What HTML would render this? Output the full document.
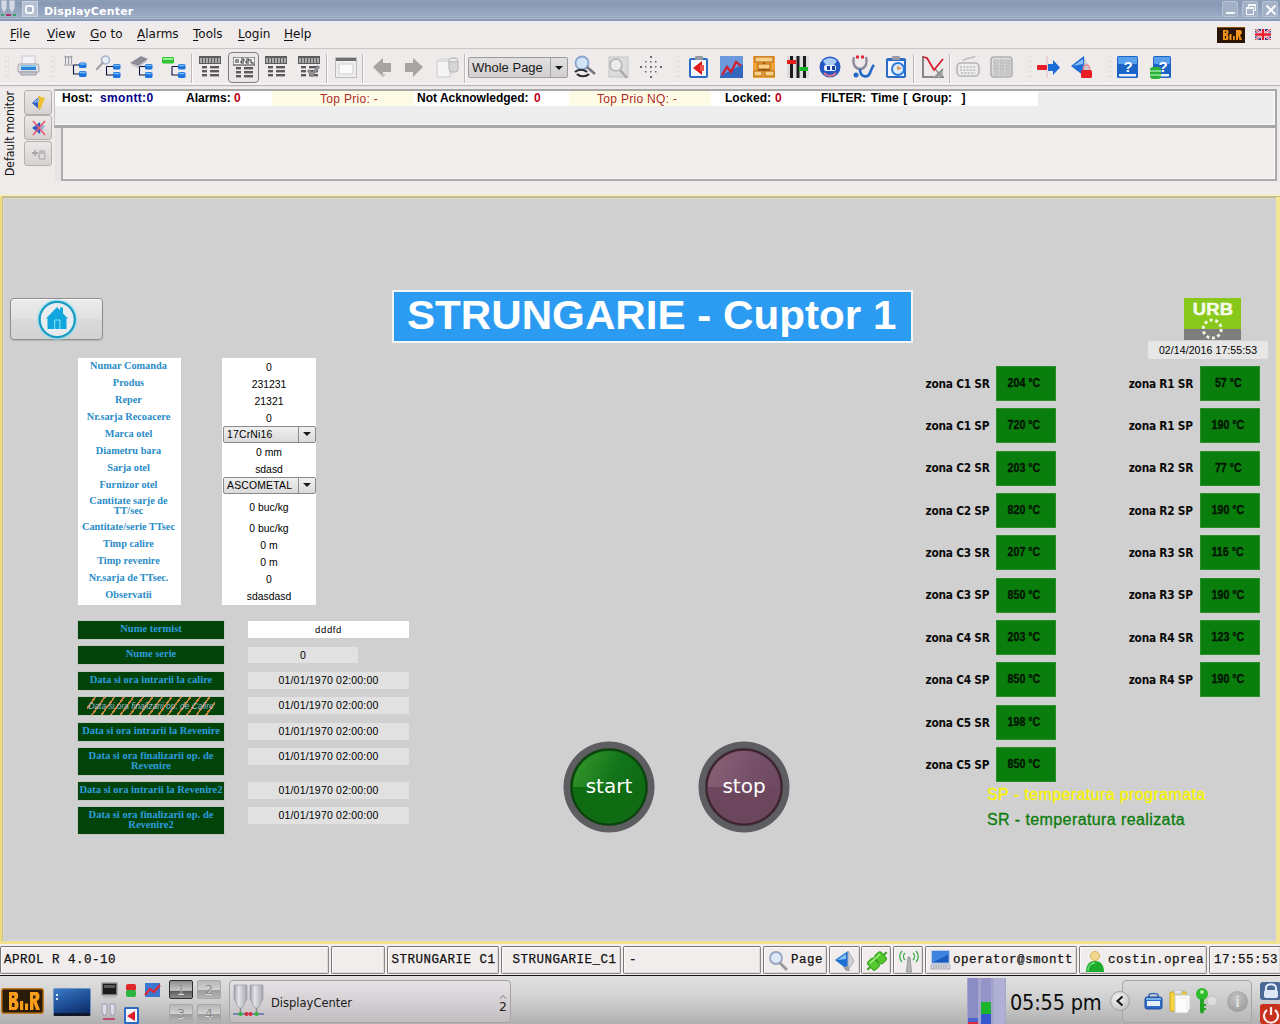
<!DOCTYPE html>
<html>
<head>
<meta charset="utf-8">
<title>DisplayCenter</title>
<style>
*{box-sizing:border-box;margin:0;padding:0}
html,body{width:1280px;height:1024px;overflow:hidden;background:#efebeb;font-family:"DejaVu Sans","Liberation Sans",sans-serif;font-size:12px;color:#000}
.abs{position:absolute}
#title{position:absolute;left:0;top:0;width:1280px;height:21px;background:linear-gradient(#8f9fb8 0,#8899b3 4px,#909fbb 8px,#9aaac4 16px,#a1b3ca 16.500px,#a1b3ca 17.500px,#8fa5be 17.500px,#8fa5be 18.500px,#adbed2 18.500px,#adbed2 19.500px,#8b9aad 19.500px,#8b9aad 21px)}
#title .t{position:absolute;left:44px;top:5px;font-weight:bold;font-size:11px;color:#fff;letter-spacing:.2px}
#menu{position:absolute;left:0;top:21px;width:1280px;height:28px;background:#efebeb;border-bottom:1px solid #c9c5c5}
#menu span{position:absolute;top:6px;font-size:12px;color:#111}
#menu u{text-decoration:underline;text-underline-offset:2px}
#toolbar{position:absolute;left:0;top:49px;width:1280px;height:38px;background:#efebeb}
#alarm{position:absolute;left:0;top:87px;width:1280px;height:107px;background:#efebeb}
#main{position:absolute;left:0;top:194px;width:1280px;height:750px;background:#d0d0d0;overflow:hidden}
#main i{position:absolute;display:block}
#mc{position:absolute;left:0;top:0;width:1280px;height:1024px}
#status{position:absolute;left:0;top:944px;width:1280px;height:32px;background:#f3efef;border-bottom:1px solid #141414;overflow:hidden}
#taskbar{position:absolute;left:0;top:976px;width:1280px;height:48px;background:linear-gradient(#e1e1e1 0,#d5d5d5 35%,#c6c6c6 65%,#b0b0b0 100%);overflow:hidden}

.ic{position:absolute}
.grip{position:absolute;top:5px;width:5px;height:27px;background-image:radial-gradient(circle,#d4d0d0 0.9px,transparent 1.2px);background-size:3px 5px;opacity:.5}
.sep{position:absolute;top:5px;width:2px;height:29px;border-left:1px solid #bdb9b9;border-right:1px solid #fbf9f9}
.combo{border:1px solid #9c9c9c;border-radius:2px;background:linear-gradient(#e2dfdf,#d2cfcf)}
.combo span{position:absolute;left:3px;top:2px;font-family:"Liberation Sans",sans-serif;font-size:13px;letter-spacing:0;color:#1a1a1a;white-space:nowrap}
.combo i{position:absolute;right:16px;top:0;width:1px;height:19px;background:#a4a4a4}
.combo b{position:absolute;right:4px;top:8px;width:0;height:0;border:4px solid transparent;border-top:4.500px solid #1a1a1a;border-bottom:0}

.wb{position:absolute;top:1px;width:16px;height:16px;background:#a3b1c7;border:1px solid #b7c2d4;border-radius:2px}
.wb i{position:absolute;display:block}

.vt{position:absolute;left:-40px;top:39px;width:100px;height:15px;line-height:15px;transform:rotate(-90deg);font-family:"DejaVu Sans Condensed","DejaVu Sans",sans-serif;font-size:12px;text-align:center;white-space:nowrap;color:#111}
.sb{position:absolute;left:24px;width:28px;height:25px;border:1px solid #b4b0b0;border-radius:3px;background:linear-gradient(#ece8e8,#d6d2d2)}
.sb svg{position:absolute;left:5px;top:3px}
.ab{position:absolute;top:4px;font-family:"Liberation Sans",sans-serif;font-weight:bold;font-size:12px;white-space:nowrap;line-height:15px}
.ar{position:absolute;top:5px;font-family:"Liberation Sans",sans-serif;font-size:12px;white-space:nowrap;line-height:15px;color:#b02a2a;letter-spacing:.3px}

.homeb{border:1px solid #8e8e8e;border-radius:4px;background:linear-gradient(#ebebeb 0,#e2e2e2 48%,#dadada 52%,#d2d2d2 100%);box-shadow:inset 0 1px 0 #fafafa,0 1px 1px #b4b4b4}
.ttl{font-family:"Liberation Sans",sans-serif;font-weight:bold;font-size:40px;line-height:49px;color:#fff;text-align:center;white-space:nowrap;transform:scaleX(1.054);transform-origin:257px 0}
.urb{font-family:"Liberation Sans",sans-serif;font-weight:bold;font-size:16px;line-height:20px;color:#f4fae8;text-align:center;letter-spacing:.2px;transform:scaleX(1.15);-webkit-text-stroke:.5px #f4fae8}
.hv{font-family:"Liberation Sans",sans-serif}
.fl{font-family:"Liberation Serif",serif;font-weight:bold;font-size:10.300px;line-height:12px;color:#2a8cc8;text-align:center;white-space:nowrap}
.fv{font-family:"Liberation Sans",sans-serif;font-size:10.400px;line-height:12px;text-align:center;white-space:nowrap;letter-spacing:0}
.cb{border:1px solid #8a8a8a;border-radius:2px;background:linear-gradient(#f0f0f0,#dadada)}
.cb span{position:absolute;left:3px;top:1px;font-family:"Liberation Sans",sans-serif;font-size:10.400px;line-height:13px;letter-spacing:.2px}
.cb i{position:absolute;right:16px;top:0;width:1px;height:100%;background:#8e8e8e}
.cb b{position:absolute;right:4px;top:5px;width:0;height:0;border:4px solid transparent;border-top:4.500px solid #1a1a1a;border-bottom:0}
.gl{background:#02430a;font-family:"Liberation Serif",serif;font-weight:bold;font-size:10.500px;color:#2c9cdc;text-align:center;white-space:nowrap;box-shadow:0 0 0 1px #c4c8c4}
.gl em{font-family:"Liberation Sans",sans-serif;font-style:italic;font-weight:normal;font-size:8.400px;color:#9cbcd4}
.hat{position:absolute;overflow:hidden}
.hat:before{content:"";position:absolute;left:9px;right:9px;top:0;bottom:0;background:repeating-linear-gradient(126deg,transparent 0,transparent 5.900px,#c8843c 5.900px,#c8843c 7.700px)}
.hat em{position:relative}
.gv{background:#e1e1e1;font-family:"Liberation Sans",sans-serif;font-size:10.500px;line-height:17px;text-align:center;white-space:nowrap;letter-spacing:.2px}
.rb{width:92px;height:92px;border-radius:50%}
.rb .hl{position:absolute;left:10px;top:10px;width:72px;height:36px;border-radius:36px 36px 0 0}
.rb span{position:absolute;left:0;top:30px;width:92px;text-align:center;font-family:"DejaVu Sans",sans-serif;font-size:20px;line-height:30px;color:#fff}
.zl{font-family:"DejaVu Sans Condensed","DejaVu Sans",sans-serif;font-size:11.800px;font-weight:bold;line-height:18px;white-space:nowrap;letter-spacing:-.25px;color:#0a0a0a}
.zb{width:60px;height:35px;background:#0a7e0c;border:1px solid #2a8e2a;font-family:"Liberation Sans",sans-serif;font-weight:bold;font-size:13px;line-height:32px;text-align:center;color:#021402;padding-right:4px}
.zb span{display:inline-block;transform:scaleX(.82);-webkit-text-stroke:.35px #021402}
.lg{font-family:"Liberation Sans",sans-serif;font-size:16px;line-height:19px;white-space:nowrap;letter-spacing:.4px;-webkit-text-stroke:.3px currentColor}

.sf{position:absolute;top:2px;height:28px;border:1px solid #8c8888;border-top-color:#767272;border-left-color:#7c7878;border-radius:2px;background:#f1eded;box-shadow:inset 1px 1px 0 #fbf9f9,inset -1px -1px 0 #dcd8d8;overflow:hidden}
.sf span{position:absolute;top:6px;font-family:"Liberation Mono",monospace;font-size:12.500px;letter-spacing:.5px;line-height:15px;white-space:nowrap;color:#111;-webkit-text-stroke:.25px #111}
.pg{position:absolute;width:24px;height:19px;border:1px solid #a8a8a8;border-radius:2px;background:linear-gradient(#b8b8b8 0,#d0d0d0 50%,#9c9c9c 55%,#b4b4b4 100%);font-family:"DejaVu Sans",sans-serif;font-size:13px;line-height:17px;text-align:center;color:#8a8a8a;text-shadow:0 1px 0 #dcdcdc}
</style>
</head>
<body>
<div id="title"><svg class="ic" style="left:0;top:0" width="17" height="17" viewBox="0 0 17 17"><path d="M1 0h6v8l-2 4H3L1 8z" fill="#d4dae6" stroke="#9aa6ba"/><path d="M9 0h6v8l-2 4h-2L9 8z" fill="#d4dae6" stroke="#9aa6ba"/><rect x="1" y="14" width="3" height="2" fill="#3c9c6c"/><rect x="6" y="14" width="5" height="2" fill="#b0306c"/><rect x="13" y="14" width="3" height="2" fill="#3c9c6c"/><path d="M4 12v2M12 12v2" stroke="#b8c0d0"/></svg>
<div class="abs" style="left:22px;top:1px;width:16px;height:16px;background:#b4c0d2;border:1px solid #c8d2e0"></div><div class="abs" style="left:25px;top:5px;width:9px;height:9px;border:2px solid #f4f6fa;border-radius:3px;background:#a8b4c8"></div>
<span class="t">DisplayCenter</span>
<div class="wb" style="left:1222px"><i style="left:3px;top:10px;width:9px;height:2px;background:#f4f6fa"></i></div>
<div class="wb" style="left:1242px"><i style="left:5px;top:2px;width:8px;height:7px;border:1px solid #f4f6fa;border-top-width:2px"></i><i style="left:3px;top:5px;width:8px;height:8px;border:1px solid #f4f6fa;border-top-width:2px;background:#a4b2c8"></i></div>
<div class="wb" style="left:1262px"><svg width="16" height="16" viewBox="0 0 16 16" style="position:absolute;left:0;top:0"><path d="M3.500 3.500l9 9M12.500 3.500l-9 9" stroke="#f8fafc" stroke-width="2.200"/></svg></div>
</div>
<div id="menu"><div class="abs" style="left:0;top:0;width:1280px;height:2px;background:linear-gradient(#eaeefa,#eeeef4)"></div>
<span style="left:10px"><u>F</u>ile</span>
<span style="left:47px"><u>V</u>iew</span>
<span style="left:90px"><u>G</u>o to</span>
<span style="left:137px"><u>A</u>larms</span>
<span style="left:193px"><u>T</u>ools</span>
<span style="left:238px"><u>L</u>ogin</span>
<span style="left:284px"><u>H</u>elp</span>
<svg class="ic" style="left:1217px;top:6px" width="28" height="16" viewBox="0 0 28 16"><rect width="28" height="16" fill="#2a1404"/><rect x="0" y="0" width="28" height="1" fill="#8c4c0c"/><path d="M6 3h4c2 0 2 4 0 4.500 2 .5 2 5.500 0 5.500H6z" fill="#f4941c"/><path d="M12.500 7h2v6h-2zM16 9h1.800v4H16z" fill="#f4941c"/><path d="M19 3h4c2.500 0 2.500 4.500 0 5l2 5h-2.500l-1.500-4.500V13h-2z" fill="#f4941c"/><rect x="7.800" y="4.500" width="1.400" height="1.600" fill="#2a1404"/><rect x="7.800" y="9" width="1.400" height="2.400" fill="#2a1404"/></svg>
<svg class="ic" style="left:1255px;top:8px" width="16" height="11" viewBox="0 0 16 11"><rect width="16" height="11" fill="#2c3c8c"/><path d="M0 0l16 11M16 0L0 11" stroke="#f4f0f4" stroke-width="2.400"/><path d="M0 0l16 11M16 0L0 11" stroke="#e02838" stroke-width="1"/><path d="M8 0v11M0 5.500h16" stroke="#f4f0f4" stroke-width="4"/><path d="M8 0v11M0 5.500h16" stroke="#e81c2c" stroke-width="2.400"/></svg>
</div>
<div id="toolbar"><div class="abs" style="left:0;top:34px;width:1280px;height:1px;background:#f9f7f7"></div><div class="abs" style="left:0;top:36px;width:1280px;height:1px;background:#bab8b8"></div><div class="abs" style="left:0;top:37px;width:1280px;height:1px;background:#e4e2e2"></div><div class="grip" style="left:4px"></div>
<svg class="ic" style="left:17px;top:6px" width="23" height="22" viewBox="0 0 23 22"><rect x="5" y="1" width="13" height="8" fill="#f4f4f6" stroke="#c8c8d0"/><path d="M2 9h19l1 2v6H1v-6z" fill="#dcdce2" stroke="#a8a8b4"/><rect x="4" y="10" width="15" height="5" fill="#2f86d8"/><rect x="4" y="10" width="15" height="2" fill="#8cc4f2"/><path d="M3 17h17l-1 3H4z" fill="#c4c4cc" stroke="#a0a0aa"/></svg>
<div class="grip" style="left:50px"></div>
<svg class="ic" style="left:64px;top:6px" width="26" height="24" viewBox="0 0 26 24"><path d="M1.500 1v8M4.500 1v8M7.500 1v8M.5 1q4 2.500 8 0" stroke="#9c9ca8" fill="none" stroke-width="1.100"/><path d="M0 10h10" stroke="#a4a4ac" stroke-width="1.200"/><path d="M9.5 10.0v9.0h5.5M9.5 10.0h5.5" stroke="#0c1444" stroke-width="1.100" fill="none"/><rect x="15" y="7.5" width="7.500" height="5.500" rx="1.600" fill="#1c74dc"/><rect x="15" y="16" width="7.500" height="6" rx="1.600" fill="#1c74dc"/><rect x="15.8" y="8.2" width="5.900" height="1.600" rx=".8" fill="#74bcf8"/><rect x="15.8" y="16.7" width="5.900" height="1.600" rx=".8" fill="#74bcf8"/></svg>
<svg class="ic" style="left:96px;top:6px" width="26" height="24" viewBox="0 0 26 24"><circle cx="9.500" cy="5" r="4" fill="#e4ecf8" stroke="#a4b0c8" stroke-width="1.500"/><path d="M6.500 8L1 14" stroke="#a4a4ac" stroke-width="2.400" stroke-linecap="round"/><path d="M10.5 11.5v8.5h6.5M10.5 11.5h6.5" stroke="#0c1444" stroke-width="1.100" fill="none"/><rect x="17" y="9" width="7.500" height="5.500" rx="1.600" fill="#1c74dc"/><rect x="17" y="17" width="7.500" height="6" rx="1.600" fill="#1c74dc"/><rect x="17.8" y="9.7" width="5.900" height="1.600" rx=".8" fill="#74bcf8"/><rect x="17.8" y="17.7" width="5.900" height="1.600" rx=".8" fill="#74bcf8"/></svg>
<svg class="ic" style="left:130px;top:6px" width="26" height="24" viewBox="0 0 26 24"><path d="M0 8L11 1l7 3-10 7z" fill="#8c8c98"/><path d="M1 9.500l7 3 9-7" stroke="#b8b8c0" fill="none"/><path d="M9.5 11.5v8.5h5.5M9.5 11.5h5.5" stroke="#0c1444" stroke-width="1.100" fill="none"/><rect x="15" y="9" width="7.500" height="5.500" rx="1.600" fill="#1c74dc"/><rect x="15" y="17" width="7.500" height="6" rx="1.600" fill="#1c74dc"/><rect x="15.8" y="9.7" width="5.900" height="1.600" rx=".8" fill="#74bcf8"/><rect x="15.8" y="17.7" width="5.900" height="1.600" rx=".8" fill="#74bcf8"/></svg>
<svg class="ic" style="left:161px;top:6px" width="26" height="24" viewBox="0 0 26 24"><rect x="1" y="2" width="12" height="6.500" rx="1" fill="#34c434"/><rect x="2" y="3" width="10" height="2" fill="#98f098"/><path d="M11 11.5v8.5h6M11 11.5h6" stroke="#0c1444" stroke-width="1.100" fill="none"/><rect x="17" y="9" width="7.500" height="5.500" rx="1.600" fill="#1c74dc"/><rect x="17" y="17" width="7.500" height="6" rx="1.600" fill="#1c74dc"/><rect x="17.8" y="9.7" width="5.900" height="1.600" rx=".8" fill="#74bcf8"/><rect x="17.8" y="17.7" width="5.900" height="1.600" rx=".8" fill="#74bcf8"/></svg>
<div class="sep" style="left:191px"></div>
<svg class="ic" style="left:199px;top:7px" width="22" height="22" viewBox="0 0 22 22"><g><rect x="0" y="0" width="22" height="8" fill="#5c5c5c"/><path d="M2 2v5M5 2v5M8 2v5M11 2v5M14 2v5M17 2v5M20 2v5" stroke="#d8d8d8" stroke-width="1.300"/><g fill="#5a5a5a"><rect x="3" y="10" width="5" height="2.400"/><rect x="11" y="10" width="9" height="2.400"/><rect x="3" y="14" width="5" height="2.400"/><rect x="11" y="14" width="9" height="2.400"/><rect x="3" y="18" width="5" height="2.400"/><rect x="11" y="18" width="9" height="2.400"/></g></g></svg>
<div class="abs" style="left:228px;top:3px;width:31px;height:31px;border:1.5px solid #7c7c7c;border-radius:4px;background:#ebe7e7"></div>
<svg class="ic" style="left:233px;top:8px" width="22" height="22" viewBox="0 0 22 22"><rect x="0" y="0" width="22" height="8" fill="#f4f4f4" stroke="#3a3a3a"/><path d="M3 2v4M5 2v4M8 2h3v2H8v2h3M13 2h3v2h-3v2h3M18 2v4h3" stroke="#2a2a2a" fill="none"/><g fill="#5a5a5a"><rect x="3" y="10" width="5" height="2.4"/><rect x="11" y="10" width="9" height="2.4"/><rect x="3" y="14" width="5" height="2.4"/><rect x="11" y="14" width="9" height="2.4"/><rect x="3" y="18" width="5" height="2.4"/><rect x="11" y="18" width="9" height="2.4"/></g></svg>
<svg class="ic" style="left:265px;top:7px" width="22" height="22" viewBox="0 0 22 22"><g><rect x="0" y="0" width="22" height="8" fill="#5c5c5c"/><path d="M2 2v5M5 2v5M8 2v5M11 2v5M14 2v5M17 2v5M20 2v5" stroke="#d8d8d8" stroke-width="1.300"/><g fill="#5a5a5a"><rect x="3" y="10" width="5" height="2.400"/><rect x="11" y="10" width="9" height="2.400"/><rect x="3" y="14" width="5" height="2.400"/><rect x="11" y="14" width="9" height="2.400"/><rect x="3" y="18" width="5" height="2.400"/><rect x="11" y="18" width="9" height="2.400"/></g></g></svg>
<svg class="ic" style="left:298px;top:7px" width="22" height="22" viewBox="0 0 22 22"><g><rect x="0" y="0" width="22" height="8" fill="#5c5c5c"/><path d="M2 2v5M5 2v5M8 2v5M11 2v5M14 2v5M17 2v5M20 2v5" stroke="#d8d8d8" stroke-width="1.300"/><g fill="#5a5a5a"><rect x="3" y="10" width="5" height="2.400"/><rect x="11" y="10" width="9" height="2.400"/><rect x="3" y="14" width="5" height="2.400"/><rect x="11" y="14" width="9" height="2.400"/><rect x="3" y="18" width="5" height="2.400"/><rect x="11" y="18" width="9" height="2.400"/></g></g><path d="M10 14l4 5 7-9" stroke="#8e8e96" stroke-width="3" fill="none"/></svg>
<div class="sep" style="left:326px"></div>
<svg class="ic" style="left:335px;top:8px" width="22" height="21" viewBox="0 0 22 21"><rect x=".5" y=".5" width="21" height="20" fill="#eeeeee" stroke="#bdbdbd"/><rect x="1" y="1" width="20" height="3" fill="#6e6e6e"/><rect x="4" y="7" width="14" height="10" fill="#fafafa" stroke="#d0d0d0"/></svg>
<div class="sep" style="left:362px"></div>
<svg class="ic" style="left:373px;top:8px" width="18" height="22" viewBox="0 0 18 22"><path d="M0 10L10 1v5h8v9h-8v5z" fill="#a8a4a4"/><path d="M10 20l-3-3h6z" fill="#c4c0c0"/></svg>
<svg class="ic" style="left:405px;top:8px" width="18" height="22" viewBox="0 0 18 22"><path d="M18 10L8 1v5H0v9h8v5z" fill="#a8a4a4"/></svg>
<svg class="ic" style="left:436px;top:7px" width="23" height="23" viewBox="0 0 23 23"><path d="M1 5h10l3 3v13H1z" fill="#f4f4f4" stroke="#c8c8c8"/><path d="M3 3h10l3 3v13" fill="none" stroke="#cfcfcf"/><rect x="13" y="2" width="9" height="14" rx="3" fill="#d6d6d6" stroke="#b4b4b4"/><ellipse cx="17.5" cy="4" rx="4.5" ry="2" fill="#ececec" stroke="#b4b4b4"/></svg>
<div class="sep" style="left:464px"></div>
<div class="abs combo" style="left:468px;top:8px;width:100px;height:21px"><span>Whole Page</span><i></i><b></b></div>
<svg class="ic" style="left:572px;top:6px" width="24" height="24" viewBox="0 0 24 24"><circle cx="10" cy="8" r="6.5" fill="#d4e4f8" stroke="#88a4cc" stroke-width="1.8"/><path d="M15 12l8 7" stroke="#787884" stroke-width="2.6"/><path d="M3 17c3-3 9-3 12 0M17 19c-3 3-9 3-12 0" stroke="#2a2a32" stroke-width="2.2" fill="none"/></svg>
<svg class="ic" style="left:607px;top:7px" width="22" height="23" viewBox="0 0 22 23"><rect x="2" y="1" width="19" height="20" fill="#dcdcdc" stroke="#c4c4c4"/><circle cx="9" cy="9" r="6" fill="#ececec" stroke="#b4b4b4" stroke-width="1.6"/><path d="M13 14l7 8" stroke="#a8a8a8" stroke-width="2.6"/></svg>
<svg class="ic" style="left:640px;top:7px" width="22" height="22" viewBox="0 0 22 22"><g fill="#6a6a6a"><rect x="10" y="0" width="2" height="2"/><rect x="10" y="20" width="2" height="2"/><rect x="0" y="10" width="2" height="2"/><rect x="20" y="10" width="2" height="2"/><rect x="10" y="10" width="2" height="2"/><rect x="5" y="5" width="1.5" height="1.5"/><rect x="10" y="5" width="1.5" height="1.5"/><rect x="15" y="5" width="1.5" height="1.5"/><rect x="5" y="10" width="1.5" height="1.5"/><rect x="15" y="10" width="1.5" height="1.5"/><rect x="5" y="15" width="1.5" height="1.5"/><rect x="10" y="15" width="1.5" height="1.5"/><rect x="15" y="15" width="1.5" height="1.5"/></g></svg>
<div class="grip" style="left:675px"></div>
<svg class="ic" style="left:688px;top:6px" width="22" height="24" viewBox="0 0 22 24"><rect x="1" y="3" width="19" height="20" rx="2" fill="#2a6cc4"/><rect x="3" y="5" width="15" height="16" fill="#f4f6fa"/><rect x="7" y="1" width="8" height="4" rx="1" fill="#9a9aa4"/><path d="M5 13l9-7v14z" fill="#e01818"/><rect x="12" y="10" width="4" height="6" fill="#f05050"/></svg>
<svg class="ic" style="left:720px;top:7px" width="23" height="22" viewBox="0 0 23 22"><rect x="0" y="0" width="23" height="22" fill="#3468c0"/><path d="M0 0h23v8L0 20z" fill="#6c98dc"/><path d="M2 19l5-8 4 5 5-10 5 4" stroke="#d41c2c" stroke-width="2.2" fill="none"/></svg>
<svg class="ic" style="left:753px;top:7px" width="22" height="22" viewBox="0 0 22 22"><rect x="0" y="0" width="22" height="22" fill="#f0a038"/><rect x="2" y="1" width="18" height="5" fill="#f8d088" stroke="#b06810"/><rect x="5" y="8" width="12" height="5" fill="#f8d088" stroke="#b06810"/><rect x="1" y="15" width="8" height="5" fill="#f8d088" stroke="#b06810"/><rect x="12" y="15" width="9" height="5" fill="#f8d088" stroke="#b06810"/><path d="M11 6v2M11 13v2M5 14h12" stroke="#703800"/></svg>
<svg class="ic" style="left:787px;top:7px" width="22" height="22" viewBox="0 0 22 22"><rect x="0" y="0" width="22" height="22" fill="#dcdcdc"/><rect x="3" y="0" width="3" height="22" fill="#1c1c1c"/><rect x="9.500" y="0" width="3" height="22" fill="#1c1c1c"/><rect x="16" y="0" width="3" height="22" fill="#1c1c1c"/><rect x="0" y="4" width="9" height="4" fill="#e41c1c"/><rect x="12" y="11" width="9" height="4" fill="#18b828"/></svg>
<svg class="ic" style="left:819px;top:7px" width="22" height="22" viewBox="0 0 22 22"><circle cx="11" cy="11" r="10.500" fill="#2458c4"/><path d="M4 5c4-4 10-4 14 0l-3 4H7z" fill="#a8ccf4"/><rect x="5" y="9" width="12" height="6" rx="2" fill="#e8f0fc"/><rect x="8" y="10" width="3" height="4" fill="#1c3c9c"/><rect x="13" y="10" width="3" height="4" fill="#1c3c9c"/><path d="M5 17c4 4 8 4 12 0" stroke="#e07088" stroke-width="2" fill="none"/></svg>
<svg class="ic" style="left:851px;top:6px" width="24" height="24" viewBox="0 0 24 24"><path d="M3 2c-2 8 2 12 6 12s8-4 6-12" stroke="#8c8c9c" stroke-width="2.4" fill="none"/><path d="M5 2h8" stroke="#e0283c" stroke-width="3" stroke-dasharray="3 2"/><path d="M9 14c0 9 8 9 10 4s2-6 4-8" stroke="#2468c8" stroke-width="2.6" fill="none"/><circle cx="5" cy="20" r="2.500" fill="#2468c8"/></svg>
<svg class="ic" style="left:885px;top:6px" width="23" height="24" viewBox="0 0 23 24"><rect x="1" y="3" width="20" height="20" rx="2" fill="#2a6cc4"/><rect x="3" y="6" width="16" height="15" fill="#f2f6fc"/><rect x="7" y="1" width="8" height="4" rx="1" fill="#9a9aa4"/><circle cx="13" cy="14" r="6" fill="#dcecfc" stroke="#2a7cd8" stroke-width="2"/><path d="M13 11v3l3-1" stroke="#e08020" stroke-width="1.4" fill="none"/></svg>
<div class="sep" style="left:913px"></div>
<svg class="ic" style="left:921px;top:7px" width="23" height="23" viewBox="0 0 23 23"><path d="M2 0v21h21" stroke="#6c6c6c" stroke-width="1.600" fill="none"/><path d="M12 21l10-9v9z" fill="#b4b4b4"/><path d="M14 13l8 9M22 13l-8 9" stroke="#8c8c8c" stroke-width="1.4"/><path d="M2 1l4 1 7 12 9-11" stroke="#d81c2c" stroke-width="1.800" fill="none"/></svg>
<div class="sep" style="left:949px"></div>
<svg class="ic" style="left:956px;top:7px" width="24" height="22" viewBox="0 0 24 22"><path d="M7 5c2-4 10-2 12-5" stroke="#bdbdbd" stroke-width="1.600" fill="none"/><rect x="1" y="7" width="22" height="13" rx="4" fill="#ececec" stroke="#b4b4b4" stroke-width="1.600"/><path d="M4 11h16M4 14h16M5 17h14" stroke="#b8b8b8" stroke-width="1.600" stroke-dasharray="2 1.300"/></svg>
<svg class="ic" style="left:990px;top:7px" width="23" height="22" viewBox="0 0 23 22"><rect x="1" y="1" width="21" height="20" rx="3" fill="#dedede" stroke="#b0b0b0" stroke-width="1.600"/><g fill="#cacaca" stroke="#bcbcbc"><rect x="4" y="4" width="4" height="4"/><rect x="10" y="4" width="4" height="4"/><rect x="16" y="4" width="4" height="4"/><rect x="4" y="9.500" width="4" height="4"/><rect x="10" y="9.500" width="4" height="4"/><rect x="16" y="9.500" width="4" height="4"/><rect x="4" y="15" width="4" height="4"/><rect x="10" y="15" width="4" height="4"/><rect x="16" y="15" width="4" height="4"/></g></svg>
<div class="grip" style="left:1027px"></div>
<svg class="ic" style="left:1037px;top:7px" width="23" height="22" viewBox="0 0 23 22"><path d="M10 0v22" stroke="#e8c8d0" stroke-width="1.400"/><rect x="0" y="9" width="10" height="5" rx="1" fill="#e81c24"/><path d="M11 8h5V4l7 7.500-7 7.500v-4h-5z" fill="#1c6cd8"/></svg>
<svg class="ic" style="left:1070px;top:6px" width="23" height="24" viewBox="0 0 23 24"><path d="M1 11l13-10v20z" fill="#1c6cd8"/><path d="M14 1l5 12-5 8z" fill="#c8c8d4"/><path d="M3 11l10-7v5z" fill="#8cc0f4"/><rect x="11" y="15" width="11" height="8" rx="1.500" fill="#e81c24"/><path d="M13.500 15v-2a3 3 0 0 1 6 0v2" stroke="#e88c94" stroke-width="1.600" fill="none"/></svg>
<div class="grip" style="left:1107px"></div>
<svg class="ic" style="left:1117px;top:7px" width="22" height="23" viewBox="0 0 22 23"><rect x="0" y="0" width="21" height="22" rx="1.500" fill="#1c64c8"/><rect x="1" y="1" width="19" height="7" fill="#58a0ec"/><rect x="2" y="18" width="17" height="2.500" fill="#e8f0fc"/><text x="11" y="16" font-family="Liberation Sans,sans-serif" font-weight="bold" font-size="15" fill="#fff" text-anchor="middle">?</text></svg>
<svg class="ic" style="left:1150px;top:7px" width="22" height="23" viewBox="0 0 22 23"><rect x="3" y="0" width="18" height="22" rx="1.500" fill="#1c64c8"/><rect x="4" y="1" width="16" height="7" fill="#58a0ec"/><rect x="10" y="18" width="9" height="2.500" fill="#e8f0fc"/><text x="13" y="16" font-family="Liberation Sans,sans-serif" font-weight="bold" font-size="15" fill="#fff" text-anchor="middle">?</text><rect x="0" y="11" width="11" height="12" rx="3" fill="#28b038"/><path d="M0 15h11M0 19h11" stroke="#98e8a0" stroke-width="1.400"/></svg>
</div>
<div id="alarm"><div class="vt">Default monitor</div>
<div class="sb" style="top:3px"><svg width="18" height="18" viewBox="0 0 18 18"><path d="M2 9l8-7v14z" fill="#2c5cc4"/><path d="M8 2l7 2-5 12-2-2z" fill="#f0c030"/><path d="M3 9l6-5v4z" fill="#8cb4f0"/></svg></div>
<div class="sb" style="top:28px"><svg width="18" height="18" viewBox="0 0 18 18"><path d="M2 9l8-6v12z" fill="#2c5cc4"/><path d="M10 4l5 3-5 8z" fill="#a0b4dc"/><path d="M3 2l12 14M15 2L3 16" stroke="#e8586c" stroke-width="1.600"/></svg></div>
<div class="sb" style="top:54px"><svg width="18" height="18" viewBox="0 0 18 18"><path d="M2 8h6M5 5v6" stroke="#a8a8a8" stroke-width="1.800"/><rect x="9" y="8" width="6" height="6" rx="1.500" fill="none" stroke="#b4b4b4" stroke-width="1.600"/><path d="M10 8V6h4v2" stroke="#b4b4b4" stroke-width="1.400" fill="none"/></svg></div>
<div class="abs" style="left:54px;top:2px;width:1223px;height:39px;background:#ededed;border:2px solid #a8a8a8;border-left:1px solid #c4c2c2;border-bottom:3px solid #a6a6a6;box-shadow:inset 0 1px 0 #f8f8f8,inset -2px -1px 0 #f6f6f6"></div>
<div class="abs" style="left:55px;top:4px;width:983px;height:15px;background:#fff"></div>
<div class="abs" style="left:272px;top:4px;width:142px;height:15px;background:#fdfbe6"></div>
<div class="abs" style="left:569px;top:4px;width:142px;height:15px;background:#fdfbe6"></div>
<span class="ab" style="left:62px">Host:</span><span class="ab" style="left:100px;color:#00008b;letter-spacing:.35px">smontt:0</span>
<span class="ab" style="left:186px">Alarms:</span><span class="ab" style="left:234px;color:#c00020">0</span>
<span class="ar" style="left:320px">Top Prio: -</span>
<span class="ab" style="left:417px">Not Acknowledged:</span><span class="ab" style="left:534px;color:#c00020">0</span>
<span class="ar" style="left:597px">Top Prio NQ: -</span>
<span class="ab" style="left:725px">Locked:</span><span class="ab" style="left:775px;color:#c00020">0</span>
<span class="ab" style="left:821px;word-spacing:1.400px">FILTER: Time [ Group:&nbsp; ]</span>
<div class="abs" style="left:55px;top:41px;width:1223px;height:53px;background:#e8e4e4"></div><div class="abs" style="left:61px;top:41px;width:1216px;height:53px;border:2px solid #adabab;border-top:0;background:#f1eded;box-shadow:inset -1px -1px 0 #f8f6f6"></div>
</div>
<div id="main"><i style="left:0;top:0;width:1280px;height:2px;background:#f4efc8"></i><i style="left:0;top:2px;width:1280px;height:2px;background:#c3bd8d"></i><i style="left:3px;top:4px;width:1274px;height:1px;background:#dbd9cc"></i><i style="left:0;top:2px;width:2px;height:748px;background:#ecdc7c"></i><i style="left:2px;top:3px;width:1px;height:745px;background:#cbc08a"></i><i style="left:3px;top:5px;width:1px;height:742px;background:#dad8d0"></i><i style="left:1271px;top:5px;width:5px;height:741px;background:#cecfd7"></i><i style="left:3px;top:745px;width:1274px;height:2px;background:#d3d3db"></i><i style="left:0;top:747px;width:1280px;height:3px;background:#f0e18e"></i><i style="left:1276px;top:3px;width:4px;height:747px;background:#f4e596"></i></div>
<div id="mc">
<div class="abs homeb" style="left:10px;top:298px;width:93px;height:42px"><svg width="44" height="42" viewBox="0 0 44 42" style="position:absolute;left:24px;top:-1px"><circle cx="22.200" cy="21.500" r="18.500" fill="none" stroke="#8ce4f8" stroke-width="4" opacity=".5"/><circle cx="22.200" cy="21.500" r="17.600" fill="#e9ecee" stroke="#1a9cc4" stroke-width="2.300"/><path d="M11 20.500L22 9l3 3.200V9.600h3v5.800l5 5.100h-1.500V31H12.500V20.500z" fill="#12a6de"/><path d="M19.700 31V22h5.200v9" fill="none" stroke="#8ce8fc" stroke-width="1"/></svg></div>
<div class="abs" style="left:392px;top:290px;width:521px;height:53px;background:#2c9cf2;border:2px solid #f2f6fa"></div>
<div class="abs ttl" style="left:391.500px;top:291px;width:519px;height:49px">STRUNGARIE - Cuptor 1</div>
<div class="abs" style="left:1184px;top:298px;width:57px;height:31px;background:#88c81a"></div><div class="abs" style="left:1184px;top:329px;width:57px;height:11px;background:#7e7e7e"></div>
<div class="abs urb" style="left:1184px;top:300px;width:58px">URB</div>
<svg class="ic" style="left:1200px;top:317px" width="24" height="24" viewBox="0 0 24 24"><circle cx="12.200" cy="12" r="9" fill="none" stroke="#eef6e4" stroke-width="3" stroke-dasharray="3 2.655"/></svg>
<div class="abs" style="left:1148px;top:341px;width:120px;height:18px;background:#e6e6e6;border-radius:2px"></div><div class="abs hv" style="left:1148px;top:341px;width:120px;height:18px;line-height:18px;text-align:center;font-size:10.500px;letter-spacing:.1px">02/14/2016 17:55:53</div>
<div class="abs" style="left:78px;top:358px;width:103px;height:247px;background:#fff"></div>
<div class="abs" style="left:222px;top:358px;width:94px;height:247px;background:#fff"></div>
<div class="abs fl" style="left:77px;top:359.6px;width:103px">Numar Comanda</div>
<div class="abs fl" style="left:77px;top:376.5px;width:103px">Produs</div>
<div class="abs fl" style="left:77px;top:393.6px;width:103px">Reper</div>
<div class="abs fl" style="left:77px;top:410.6px;width:103px">Nr.sarja Recoacere</div>
<div class="abs fl" style="left:77px;top:428.0px;width:103px">Marca otel</div>
<div class="abs fl" style="left:77px;top:444.8px;width:103px">Diametru bara</div>
<div class="abs fl" style="left:77px;top:461.7px;width:103px">Sarja otel</div>
<div class="abs fl" style="left:77px;top:479.0px;width:103px">Furnizor otel</div>
<div class="abs fl" style="left:77px;top:494.6px;width:103px">Cantitate sarje de</div>
<div class="abs fl" style="left:77px;top:505.2px;width:103px">TT/sec</div>
<div class="abs fl" style="left:77px;top:521.0px;width:103px">Cantitate/serie TTsec</div>
<div class="abs fl" style="left:77px;top:537.8px;width:103px">Timp calire</div>
<div class="abs fl" style="left:77px;top:554.7px;width:103px">Timp revenire</div>
<div class="abs fl" style="left:77px;top:572.0px;width:103px">Nr.sarja de TTsec.</div>
<div class="abs fl" style="left:77px;top:589.3px;width:103px">Observatii</div>
<div class="abs fv" style="left:222px;top:362px;width:94px">0</div>
<div class="abs fv" style="left:222px;top:379px;width:94px">231231</div>
<div class="abs fv" style="left:222px;top:396px;width:94px">21321</div>
<div class="abs fv" style="left:222px;top:413px;width:94px">0</div>
<div class="abs fv" style="left:222px;top:447px;width:94px">0 mm</div>
<div class="abs fv" style="left:222px;top:464px;width:94px">sdasd</div>
<div class="abs fv" style="left:222px;top:502px;width:94px">0 buc/kg</div>
<div class="abs fv" style="left:222px;top:523px;width:94px">0 buc/kg</div>
<div class="abs fv" style="left:222px;top:540px;width:94px">0 m</div>
<div class="abs fv" style="left:222px;top:557px;width:94px">0 m</div>
<div class="abs fv" style="left:222px;top:574px;width:94px">0</div>
<div class="abs fv" style="left:222px;top:591px;width:94px">sdasdasd</div>
<div class="abs cb" style="left:223px;top:426px;width:93px;height:17px"><span>17CrNi16</span><i></i><b></b></div>
<div class="abs cb" style="left:223px;top:477px;width:93px;height:17px"><span>ASCOMETAL</span><i></i><b></b></div>
<div class="abs gl" style="left:78px;top:620.6px;width:146px;height:18.0px;line-height:16.0px">Nume termist</div>
<div class="abs gl" style="left:78px;top:645.7px;width:146px;height:18.0px;line-height:16.0px">Nume serie</div>
<div class="abs gl" style="left:78px;top:672.0px;width:146px;height:18.0px;line-height:16.0px">Data si ora intrarii la calire</div>
<div class="abs gl hat" style="left:78px;top:696.7px;width:146px;height:18.0px;line-height:17.0px"><em>Data si ora finalizarii op. de Calire</em></div>
<div class="abs gl" style="left:78px;top:722.6px;width:146px;height:18.0px;line-height:16.0px">Data si ora intrarii la Revenire</div>
<div class="abs gl" style="left:78px;top:747.7px;width:146px;height:27.3px;line-height:10px;padding-top:3px">Data si ora finalizarii op. de<br>Revenire</div>
<div class="abs gl" style="left:78px;top:782.0px;width:146px;height:17.5px;line-height:15.5px">Data si ora intrarii la Revenire2</div>
<div class="abs gl" style="left:78px;top:806.6px;width:146px;height:27.0px;line-height:10px;padding-top:3px">Data si ora finalizarii op. de<br>Revenire2</div>
<div class="abs gv" style="left:248px;top:621px;width:161px;height:17px;background:#fff;font-size:9.500px;letter-spacing:.6px">dddfd</div>
<div class="abs gv" style="left:248px;top:647px;width:110px;height:16px">0</div>
<div class="abs gv" style="left:248px;top:672px;width:161px;height:17px">01/01/1970 02:00:00</div>
<div class="abs gv" style="left:248px;top:697px;width:161px;height:17px">01/01/1970 02:00:00</div>
<div class="abs gv" style="left:248px;top:723px;width:161px;height:17px">01/01/1970 02:00:00</div>
<div class="abs gv" style="left:248px;top:748px;width:161px;height:17px">01/01/1970 02:00:00</div>
<div class="abs gv" style="left:248px;top:782px;width:161px;height:17px">01/01/1970 02:00:00</div>
<div class="abs gv" style="left:248px;top:807px;width:161px;height:17px">01/01/1970 02:00:00</div>
<div class="abs rb" style="left:563px;top:741px;background:radial-gradient(circle at 50% 50%,#0f6c12 0,#0f6c12 36px,#0a400c 37px,#0a400c 38px,#5e5e62 39.500px,#5e5e62 45px,rgba(94,94,98,0) 46px)"><div class="hl" style="background:linear-gradient(115deg,#3a9a2c 0,#12741a 60%,#0e6a12 100%)"></div><span>start</span></div>
<div class="abs rb" style="left:698px;top:741px;background:radial-gradient(circle at 50% 50%,#6c465c 0,#6c465c 36px,#3a222c 37px,#3a222c 38px,#5e5e62 39.500px,#5e5e62 45px,rgba(94,94,98,0) 46px)"><div class="hl" style="background:linear-gradient(115deg,#8c6478 0,#76506a 60%,#6e485e 100%)"></div><span>stop</span></div>
<div class="abs zl" style="left:925.600px;top:374.5px">zona C1 SR</div><div class="abs zb" style="left:996px;top:365.8px"><span>204 °C</span></div>
<div class="abs zl" style="left:925.600px;top:416.9px">zona C1 SP</div><div class="abs zb" style="left:996px;top:408.2px"><span>720 °C</span></div>
<div class="abs zl" style="left:925.600px;top:459.2px">zona C2 SR</div><div class="abs zb" style="left:996px;top:450.5px"><span>203 °C</span></div>
<div class="abs zl" style="left:925.600px;top:501.6px">zona C2 SP</div><div class="abs zb" style="left:996px;top:492.9px"><span>820 °C</span></div>
<div class="abs zl" style="left:925.600px;top:544.0px">zona C3 SR</div><div class="abs zb" style="left:996px;top:535.3px"><span>207 °C</span></div>
<div class="abs zl" style="left:925.600px;top:586.4px">zona C3 SP</div><div class="abs zb" style="left:996px;top:577.7px"><span>850 °C</span></div>
<div class="abs zl" style="left:925.600px;top:628.7px">zona C4 SR</div><div class="abs zb" style="left:996px;top:620.0px"><span>203 °C</span></div>
<div class="abs zl" style="left:925.600px;top:671.1px">zona C4 SP</div><div class="abs zb" style="left:996px;top:662.4px"><span>850 °C</span></div>
<div class="abs zl" style="left:925.600px;top:713.5px">zona C5 SR</div><div class="abs zb" style="left:996px;top:704.8px"><span>198 °C</span></div>
<div class="abs zl" style="left:925.600px;top:755.8px">zona C5 SP</div><div class="abs zb" style="left:996px;top:747.1px"><span>850 °C</span></div>
<div class="abs zl" style="left:1128.700px;top:374.5px">zona R1 SR</div><div class="abs zb" style="left:1200px;top:365.8px"><span>57 °C</span></div>
<div class="abs zl" style="left:1128.700px;top:416.9px">zona R1 SP</div><div class="abs zb" style="left:1200px;top:408.2px"><span>190 °C</span></div>
<div class="abs zl" style="left:1128.700px;top:459.2px">zona R2 SR</div><div class="abs zb" style="left:1200px;top:450.5px"><span>77 °C</span></div>
<div class="abs zl" style="left:1128.700px;top:501.6px">zona R2 SP</div><div class="abs zb" style="left:1200px;top:492.9px"><span>190 °C</span></div>
<div class="abs zl" style="left:1128.700px;top:544.0px">zona R3 SR</div><div class="abs zb" style="left:1200px;top:535.3px"><span>116 °C</span></div>
<div class="abs zl" style="left:1128.700px;top:586.4px">zona R3 SP</div><div class="abs zb" style="left:1200px;top:577.7px"><span>190 °C</span></div>
<div class="abs zl" style="left:1128.700px;top:628.7px">zona R4 SR</div><div class="abs zb" style="left:1200px;top:620.0px"><span>123 °C</span></div>
<div class="abs zl" style="left:1128.700px;top:671.1px">zona R4 SP</div><div class="abs zb" style="left:1200px;top:662.4px"><span>190 °C</span></div>
<div class="abs lg" style="left:987px;top:785px;color:#f8f400">SP - temperatura programata</div>
<div class="abs lg" style="left:987px;top:810px;color:#0c7c0c">SR - temperatura realizata</div>
</div>
<div id="status"><div class="sf" style="left:0;width:329px"><span style="left:3px">APROL R 4.0-10</span></div>
<div class="sf" style="left:331px;width:54px"></div>
<div class="sf" style="left:387px;width:112px"><span style="left:3.500px">STRUNGARIE C1</span></div>
<div class="sf" style="left:501px;width:120px"><span style="left:10.500px">STRUNGARIE_C1</span></div>
<div class="sf" style="left:623px;width:138px"><span style="left:5px">-</span></div>
<div class="sf" style="left:763px;width:64px"><svg class="ic" style="left:4px;top:3px" width="22" height="22" viewBox="0 0 22 22"><circle cx="8" cy="8" r="6" fill="#dce8f8" stroke="#98a4c0" stroke-width="1.800"/><path d="M12 13l7 7" stroke="#989898" stroke-width="2.800"/></svg><span style="left:27px">Page</span></div>
<div class="sf" style="left:829px;width:31px"><svg class="ic" style="left:4px;top:2px" width="24" height="24" viewBox="0 0 24 24"><path d="M1 11l13-9v19z" fill="#1c70d4"/><path d="M14 2l6 10-6 9z" fill="#d0d0d8" stroke="#a8a8b0"/><path d="M3 11l9-6v5z" fill="#88c0f4"/><path d="M9 18l3 4h4l-2-5z" fill="#a0a0a8"/></svg></div>
<div class="sf" style="left:861px;width:30px"><svg class="ic" style="left:3px;top:2px" width="24" height="24" viewBox="0 0 24 24"><g transform="rotate(-42 12 12)"><path d="M-1 12h26" stroke="#3c9c24" stroke-width="2"/><rect x="3" y="6.500" width="8.500" height="11" rx="2.500" fill="#54c82c" stroke="#34a01c"/><rect x="12.500" y="6.500" width="8.500" height="11" rx="2.500" fill="#54c82c" stroke="#34a01c"/><path d="M5 9h14" stroke="#a8f088" stroke-width="1.400"/></g></svg></div>
<div class="sf" style="left:893px;width:30px"><svg class="ic" style="left:3px;top:2px" width="24" height="24" viewBox="0 0 24 24"><path d="M11 8h2l1.500 15h-5z" fill="#b4b4b4" stroke="#8c8c8c" stroke-width=".8"/><path d="M8 4c-2 2-2 5 0 7M16 4c2 2 2 5 0 7M5 2c-3 3-3 8 0 11M19 2c3 3 3 8 0 11" stroke="#3cac4c" stroke-width="1.300" fill="none"/></svg></div>
<div class="sf" style="left:925px;width:152px"><svg class="ic" style="left:4px;top:3px" width="22" height="22" viewBox="0 0 22 22"><rect x="2" y="1" width="17" height="12" fill="#1c5cc0" stroke="#88a8d8"/><path d="M2 13L19 4V1H2z" fill="#3c84e0"/><rect x="1" y="15" width="19" height="4" fill="#dcdce4" stroke="#a8a8b4"/><path d="M3 17h15" stroke="#8c8c98" stroke-dasharray="1.500 1"/></svg><span style="left:27px">operator@smontt</span></div>
<div class="sf" style="left:1079px;width:128px"><svg class="ic" style="left:5px;top:3px" width="20" height="22" viewBox="0 0 20 22"><circle cx="10" cy="6" r="4.500" fill="#f4d890" stroke="#d8b050"/><path d="M1 22c0-8 4-11 9-11s9 3 9 11z" fill="#1cac2c"/><path d="M3 21c0-5 3-8 7-8" stroke="#7ce088" stroke-width="1.400" fill="none"/></svg><span style="left:28px">costin.oprea</span></div>
<div class="sf" style="left:1209px;width:72px"><span style="left:4px">17:55:53</span></div>
</div>
<div id="taskbar"><svg class="ic" style="left:1px;top:12px" width="43" height="26" viewBox="0 0 43 26"><rect x=".75" y=".75" width="41.500" height="24.500" rx="2" fill="#2a1a08" stroke="#c47a1c" stroke-width="1.500"/><path d="M8 4h6.500c3.500 0 3.500 7 .5 8 3.500 1 3.500 10-.5 10H8z" fill="#f89c1c"/><path d="M11 7.500h2.200v2.500H11zM11 15h2.500v4H11z" fill="#2a1a08"/><path d="M19 13h3.200v9H19zM24 15.500h3v6.500h-3z" fill="#f89c1c"/><path d="M29 4h6.500c4 0 4 8.500 0 9l3.500 9h-4l-2.500-8v8H29z" fill="#f89c1c"/><path d="M32 7.500h2.500v3H32z" fill="#2a1a08"/></svg>
<div class="abs" style="left:53px;top:12px;width:38px;height:28px;background:linear-gradient(160deg,#3c7cc4 0,#1c4c94 55%,#0c2c64 100%);border:1px solid #6c94c4;border-bottom:3px solid #10182c;border-radius:2px"></div>
<div class="abs" style="left:56px;top:18px;width:2px;height:2px;background:#d8e8f8;box-shadow:0 4px 0 #d8e8f8"></div>
<svg class="ic" style="left:100px;top:5px" width="62" height="44" viewBox="0 0 62 44"><rect x="2" y="2" width="15" height="12" fill="#1c1c1c" stroke="#9c9c9c" stroke-width="1.400"/><rect x="4" y="4" width="11" height="3" fill="#5c5c5c"/><rect x="3" y="15" width="13" height="2" fill="#bcbcbc"/><rect x="26" y="3" width="10" height="7" rx="2" fill="#e0282c"/><rect x="26" y="9" width="10" height="7" rx="2" fill="#2cb43c"/><rect x="45" y="2" width="15" height="14" fill="#3c78d0"/><path d="M45 14l5-6 4 3 6-7" stroke="#e02838" stroke-width="2.200" fill="none"/><path d="M2 23h5v8l-2 4H4l-2-4zM10 23h5v8l-2 4h-1l-2-4z" fill="#dcdce8" stroke="#9c9cb0"/><path d="M3 38h12" stroke="#c03060" stroke-width="1.600"/><rect x="24" y="26" width="15" height="17" rx="1.500" fill="#2a6cc4"/><rect x="26" y="28" width="11" height="13" fill="#f4f6fa"/><path d="M27 35l8-5v10z" fill="#e01c24"/></svg>
<div class="pg" style="left:169px;top:4px;border-color:#2c2c2c;background:linear-gradient(#8c8c8c 0,#c8c8c8 55%,#5c5c5c 60%,#8c8c8c 100%)">1</div>
<div class="pg" style="left:197px;top:4px">2</div>
<div class="pg" style="left:169px;top:28px">3</div>
<div class="pg" style="left:197px;top:28px">4</div>
<div class="abs" style="left:229px;top:4px;width:282px;height:43px;border:1px solid #a4a0a4;border-radius:4px;background:linear-gradient(#e6e2e6 0,#d4d0d4 50%,#c0bcc0 100%)"></div>
<svg class="ic" style="left:232px;top:8px" width="34" height="34" viewBox="0 0 34 34"><defs><linearGradient id="fg" x1="0" x2="1" y1="0" y2="0"><stop offset="0" stop-color="#9c9ca6"/><stop offset=".35" stop-color="#e4e4ea"/><stop offset="1" stop-color="#a4a4ae"/></linearGradient></defs><path d="M2 1h13v14l-5 9H7l-5-9z" fill="url(#fg)" stroke="#a0a0aa" stroke-width=".8"/><path d="M18 1h13v14l-5 9h-3l-5-9z" fill="url(#fg)" stroke="#a0a0aa" stroke-width=".8"/><path d="M8.500 24v5M24.500 24v5" stroke="#8c8c98" stroke-width="1.400"/><path d="M1 30h31" stroke="#3c5ca4" stroke-width="1.200"/><circle cx="8.500" cy="30" r="2" fill="#2cb43c"/><circle cx="14.500" cy="30" r="2" fill="#e0283c"/><circle cx="18.500" cy="30" r="2" fill="#e0283c"/><circle cx="24.500" cy="30" r="2" fill="#2cb43c"/></svg>
<span class="abs" style="left:271px;top:19px;font-size:11.500px;line-height:16px;color:#1c1c1c">DisplayCenter</span>
<span class="abs" style="left:499px;top:24px;font-size:12.500px;line-height:14px;color:#1c1c1c">2</span>
<svg class="ic" style="left:499px;top:18px" width="8" height="5" viewBox="0 0 8 5"><path d="M1 4.500l3-3 3 3" stroke="#6c6c6c" fill="none"/></svg>
<svg class="ic" style="left:967px;top:2px" width="39" height="46" viewBox="0 0 39 46"><rect x="0" y="0" width="39" height="46" fill="#a4a4cc"/><rect x="1" y="0" width="10" height="46" fill="#8c8cc4"/><rect x="14" y="0" width="10" height="46" fill="#9494c8"/><rect x="27" y="0" width="11" height="46" fill="#b0b0d4"/><rect x="14" y="24" width="10" height="12" fill="#1cb42c"/><rect x="14" y="36" width="10" height="10" fill="#3458d0"/><rect x="1" y="40" width="10" height="4" fill="#4c64d0"/><rect x="1" y="44" width="10" height="2" fill="#e0283c"/></svg>
<span class="abs" style="left:1010px;top:12px;font-family:'DejaVu Sans Condensed','DejaVu Sans',sans-serif;font-size:21.500px;line-height:30px;color:#0c0c0c;letter-spacing:-.2px">05:55 pm</span>
<div class="abs" style="left:1122px;top:4px;width:130px;height:43px;border:1px solid #a4a4a4;border-radius:4px;background:linear-gradient(#dadada 0,#cacaca 50%,#b8b8b8 100%)"></div>
<div class="abs" style="left:1110px;top:15px;width:20px;height:20px;border-radius:50%;background:radial-gradient(circle at 40% 35%,#f4f4f4 0,#c8c8c8 70%,#9c9c9c 100%);border:1px solid #a4a4a4"></div>
<svg class="ic" style="left:1114px;top:19px" width="12" height="12" viewBox="0 0 12 12"><path d="M8.500 1.500L3.500 6l5 4.500" stroke="#1a1a1a" stroke-width="2.200" fill="none"/></svg>
<svg class="ic" style="left:1144px;top:16px" width="19" height="20" viewBox="0 0 19 20"><path d="M5 5V3c0-2 9-2 9 0v2" stroke="#3c6cb4" stroke-width="1.600" fill="none"/><rect x="1" y="5" width="17" height="12" rx="2" fill="#2c6cc8" stroke="#1c4c9c"/><rect x="3" y="9" width="13" height="5" fill="#e4f0fc"/><rect x="2" y="6" width="15" height="2" fill="#7cb0ec"/></svg>
<svg class="ic" style="left:1169px;top:14px" width="23" height="24" viewBox="0 0 23 24"><rect x="1" y="2" width="16" height="19" rx="1" fill="#f4d438" stroke="#c8a41c"/><rect x="5" y="0" width="8" height="4" rx="1" fill="#e8e8ec" stroke="#a8a8b0" stroke-width=".8"/><path d="M6 5h15v14l-3 4H6z" fill="#fcfcfc" stroke="#c8c8c8"/><path d="M9 8h9v12" stroke="#e4e4e4" fill="none"/></svg>
<svg class="ic" style="left:1194px;top:11px" width="24" height="28" viewBox="0 0 24 28"><circle cx="18" cy="14" r="5" fill="#dcdcdc" stroke="#c0c0c0"/><circle cx="8" cy="7" r="6" fill="#2cbc2c"/><circle cx="8" cy="5" r="2" fill="#b4f0a4"/><path d="M6 12h4v13l-2 2-2-2z" fill="#24a424"/><path d="M10 17h2v2h-2zM10 21h2v2h-2z" fill="#24a424"/></svg>
<div class="abs" style="left:1227px;top:15px;width:21px;height:21px;border-radius:50%;background:radial-gradient(circle at 45% 35%,#c4c4c4 0,#a0a0a0 70%,#8c8c8c 100%)"></div>
<span class="abs" style="left:1227px;top:15px;width:21px;text-align:center;font-family:'Liberation Serif',serif;font-weight:bold;font-size:16px;line-height:21px;color:#e0e0e0">i</span>
<div class="abs" style="left:1260px;top:6px;width:21px;height:18px;background:#4a6a96;border-radius:3px"></div>
<svg class="ic" style="left:1262px;top:7px" width="18" height="16" viewBox="0 0 18 16"><path d="M4 8V5c0-5 10-5 10 0v3" stroke="#e8f0fc" stroke-width="2" fill="none"/><rect x="2" y="7" width="14" height="8" rx="2" fill="#dce8f8"/></svg>
<div class="abs" style="left:1260px;top:28px;width:21px;height:20px;background:#c8301c;border-radius:3px"></div>
<svg class="ic" style="left:1262px;top:30px" width="18" height="18" viewBox="0 0 18 18"><path d="M5 4a7 7 0 1 0 8 0" stroke="#fcecec" stroke-width="2.200" fill="none"/><path d="M9 1v8" stroke="#fcecec" stroke-width="2.200"/></svg>
</div>
</body>
</html>
